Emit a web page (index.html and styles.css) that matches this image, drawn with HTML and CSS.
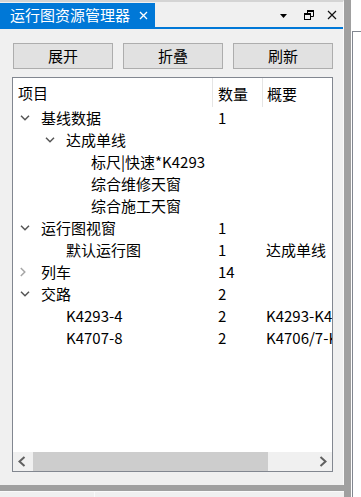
FILE: index.html
```html
<!DOCTYPE html>
<html lang="zh-CN">
<head>
    <meta charset="UTF-8">
    <meta name="viewport" content="width=device-width, initial-scale=1.0">
    <title>运行图资源管理器</title>
    <link rel="stylesheet" href="styles.css">
</head>
<body>
<div class="app">
    <div class="panel">
        <div class="titlebar">
            <div class="tab">
                <span>运行图资源管理器</span>
                <svg class="tab-close" width="9" height="9" viewBox="0 0 9 9"><path d="M1 1L8 8M8 1L1 8" stroke="#fff" stroke-width="1.3" fill="none"/></svg>
            </div>
            <div class="win-icons">
                <svg width="7" height="4" viewBox="0 0 7 4"><path d="M0 0H7L3.5 4Z" fill="#000"/></svg>
                <svg width="10" height="10" viewBox="0 0 10 10">
                    <path d="M3.5 3V0.5H9.5V6.5H7" stroke="#000" fill="none"/>
                    <path d="M3 1H10" stroke="#000" stroke-width="2"/>
                    <rect x="0.5" y="3.5" width="6" height="6" stroke="#000" fill="none"/>
                    <path d="M0 4H7" stroke="#000" stroke-width="2"/>
                </svg>
                <svg width="10" height="10" viewBox="0 0 10 10"><path d="M1 1L9 9M9 1L1 9" stroke="#111" stroke-width="1.2" fill="none"/></svg>
            </div>
        </div>

        <div class="toolbar">
            <button>展开</button>
            <button>折叠</button>
            <button>刷新</button>
        </div>

        <div class="tree">
            <div class="tree-head">
                <div class="col-name">项目</div>
                <div class="col-count">数量</div>
                <div class="col-desc">概要</div>
            </div>
            <div class="tree-body">
                <div class="row lvl0">
                    <div class="col-name"><span class="toggle"><svg width="10" height="6" viewBox="0 0 10 6"><path d="M1 0.8L5 4.8L9 0.8" stroke="#555" stroke-width="1.5" fill="none"/></svg></span>基线数据</div>
                    <div class="col-count">1</div>
                    <div class="col-desc"></div>
                </div>
                <div class="row lvl1">
                    <div class="col-name"><span class="toggle"><svg width="10" height="6" viewBox="0 0 10 6"><path d="M1 0.8L5 4.8L9 0.8" stroke="#555" stroke-width="1.5" fill="none"/></svg></span>达成单线</div>
                    <div class="col-count"></div>
                    <div class="col-desc"></div>
                </div>
                <div class="row lvl2">
                    <div class="col-name"><span class="toggle"></span>标尺|快速*K4293</div>
                    <div class="col-count"></div>
                    <div class="col-desc"></div>
                </div>
                <div class="row lvl2">
                    <div class="col-name"><span class="toggle"></span>综合维修天窗</div>
                    <div class="col-count"></div>
                    <div class="col-desc"></div>
                </div>
                <div class="row lvl2">
                    <div class="col-name"><span class="toggle"></span>综合施工天窗</div>
                    <div class="col-count"></div>
                    <div class="col-desc"></div>
                </div>
                <div class="row lvl0">
                    <div class="col-name"><span class="toggle"><svg width="10" height="6" viewBox="0 0 10 6"><path d="M1 0.8L5 4.8L9 0.8" stroke="#555" stroke-width="1.5" fill="none"/></svg></span>运行图视窗</div>
                    <div class="col-count">1</div>
                    <div class="col-desc"></div>
                </div>
                <div class="row lvl1">
                    <div class="col-name"><span class="toggle"></span>默认运行图</div>
                    <div class="col-count">1</div>
                    <div class="col-desc">达成单线</div>
                </div>
                <div class="row lvl0">
                    <div class="col-name"><span class="toggle"><svg width="6" height="10" viewBox="0 0 6 10"><path d="M0.8 1L4.8 5L0.8 9" stroke="#a6a6a6" stroke-width="1.5" fill="none"/></svg></span>列车</div>
                    <div class="col-count">14</div>
                    <div class="col-desc"></div>
                </div>
                <div class="row lvl0">
                    <div class="col-name"><span class="toggle"><svg width="10" height="6" viewBox="0 0 10 6"><path d="M1 0.8L5 4.8L9 0.8" stroke="#555" stroke-width="1.5" fill="none"/></svg></span>交路</div>
                    <div class="col-count">2</div>
                    <div class="col-desc"></div>
                </div>
                <div class="row lvl1">
                    <div class="col-name"><span class="toggle"></span>K4293-4</div>
                    <div class="col-count">2</div>
                    <div class="col-desc">K4293-K4294</div>
                </div>
                <div class="row lvl1">
                    <div class="col-name"><span class="toggle"></span>K4707-8</div>
                    <div class="col-count">2</div>
                    <div class="col-desc">K4706/7-K4708</div>
                </div>
            </div>
            <div class="hscroll">
                <svg class="arrow" width="8" height="11" viewBox="0 0 8 11"><path d="M6.5 1L1.5 5.5L6.5 10" stroke="#606060" stroke-width="2" fill="none"/></svg>
                <div class="track"><div class="thumb"></div></div>
                <svg class="arrow" width="8" height="11" viewBox="0 0 8 11"><path d="M1.5 1L6.5 5.5L1.5 10" stroke="#606060" stroke-width="2" fill="none"/></svg>
            </div>
        </div>
    </div>
    <div class="vsplit"></div>
    <div class="side"><div class="side-box"></div></div>
    <div class="hsplit"></div>
    <div class="bottom">
        <div class="bottom-cell first"></div>
        <div class="bottom-cell"></div>
    </div>
</div>
</body>
</html>
```

FILE: styles.css
```css
* {
    box-sizing: border-box;
}
body {
    margin: 0;
    background-color: #ffffff;
    font-family: "Noto Sans CJK SC", "Microsoft YaHei", sans-serif;
    font-size: 15px;
    color: #000;
}
.app {
    display: grid;
    grid-template-columns: 344px 7px 10px;
    grid-template-rows: 485px 6px 6px;
    width: 361px;
    height: 497px;
    overflow: hidden;
}
.panel {
    grid-column: 1;
    grid-row: 1;
    background-color: #f0f0f0;
    border-top: 2px solid #d4d4d4;
    border-right: 1px solid #fafafa;
    padding-top: 1px;
    display: flex;
    flex-direction: column;
}
.titlebar {
    height: 26px;
    display: flex;
    justify-content: space-between;
    border-bottom: 2px solid #0078d7;
    flex-shrink: 0;
}
.tab {
    width: 155px;
    background-color: #0078d7;
    color: #fff;
    display: flex;
    align-items: center;
    padding-left: 10px;
    line-height: 24px;
}
.tab-close {
    margin-left: 9px;
}
.win-icons {
    display: flex;
    align-items: center;
    padding-right: 6px;
}
.win-icons svg:nth-child(1) {
    margin-right: 17px;
    margin-top: 1px;
}
.win-icons svg:nth-child(2) {
    margin-right: 13px;
}
.toolbar {
    display: grid;
    grid-template-columns: 100px 100px 100px;
    column-gap: 10px;
    padding: 14px 0 0 13px;
}
.toolbar button {
    height: 26px;
    background-color: #e1e1e1;
    border: 1px solid #adadad;
    font-family: inherit;
    font-size: 15px;
    color: #000;
    padding: 0;
    line-height: 22px;
}
.tree {
    margin: 8px 10px 0 12px;
    height: 395px;
    border: 1px solid #828790;
    background-color: #fff;
    display: flex;
    flex-direction: column;
    overflow: hidden;
}
.tree-head,
.row {
    display: flex;
    white-space: nowrap;
}
.tree-head {
    height: 29px;
    line-height: 32px;
    flex-shrink: 0;
}
.tree-head .col-count,
.tree-head .col-desc {
    border-left: 1px solid #e5e5e5;
}
.col-name {
    width: 199px;
    padding-left: 5px;
    display: flex;
    align-items: center;
    flex-shrink: 0;
}
.col-count {
    width: 50px;
    padding-left: 5px;
    flex-shrink: 0;
}
.col-desc {
    padding-left: 4px;
    overflow: hidden;
    flex: 1;
}
.tree-body {
    flex: 1;
}
.row {
    height: 22px;
    line-height: 22px;
}
.row .col-count {
    padding-left: 6px;
}
.toggle {
    width: 23px;
    height: 22px;
    display: inline-flex;
    align-items: center;
    padding-left: 2px;
    flex-shrink: 0;
}
.lvl1 .col-name {
    padding-left: 30px;
}
.lvl2 .col-name {
    padding-left: 55px;
}
.hscroll {
    height: 19px;
    background-color: #f0f0f0;
    display: flex;
    align-items: center;
    flex-shrink: 0;
}
.hscroll .arrow {
    flex-shrink: 0;
    margin: 0 7px 0 5px;
}
.hscroll .arrow:last-child {
    margin: 0 5px 0 7px;
}
.track {
    flex: 1;
    height: 19px;
}
.thumb {
    width: 235px;
    height: 19px;
    background-color: #cdcdcd;
}
.vsplit {
    grid-column: 2;
    grid-row: 1 / 4;
    background-color: #a0a0a0;
}
.side {
    grid-column: 3;
    grid-row: 1 / 4;
    background-color: #fff;
    padding-top: 31px;
}
.side-box {
    height: 100%;
    border-left: 1px solid #828790;
    border-top: 1px solid #828790;
    margin-left: 1px;
}
.hsplit {
    grid-column: 1;
    grid-row: 2;
    background-color: #a0a0a0;
}
.bottom {
    grid-column: 1;
    grid-row: 3;
    display: flex;
    background-color: #f0f0f0;
    border-top: 1px solid #fafafa;
}
.bottom-cell {
    flex: 1;
    border-left: 1px solid #fafafa;
}
.bottom-cell.first {
    flex: 0 0 94px;
    border-left: none;
}
```
